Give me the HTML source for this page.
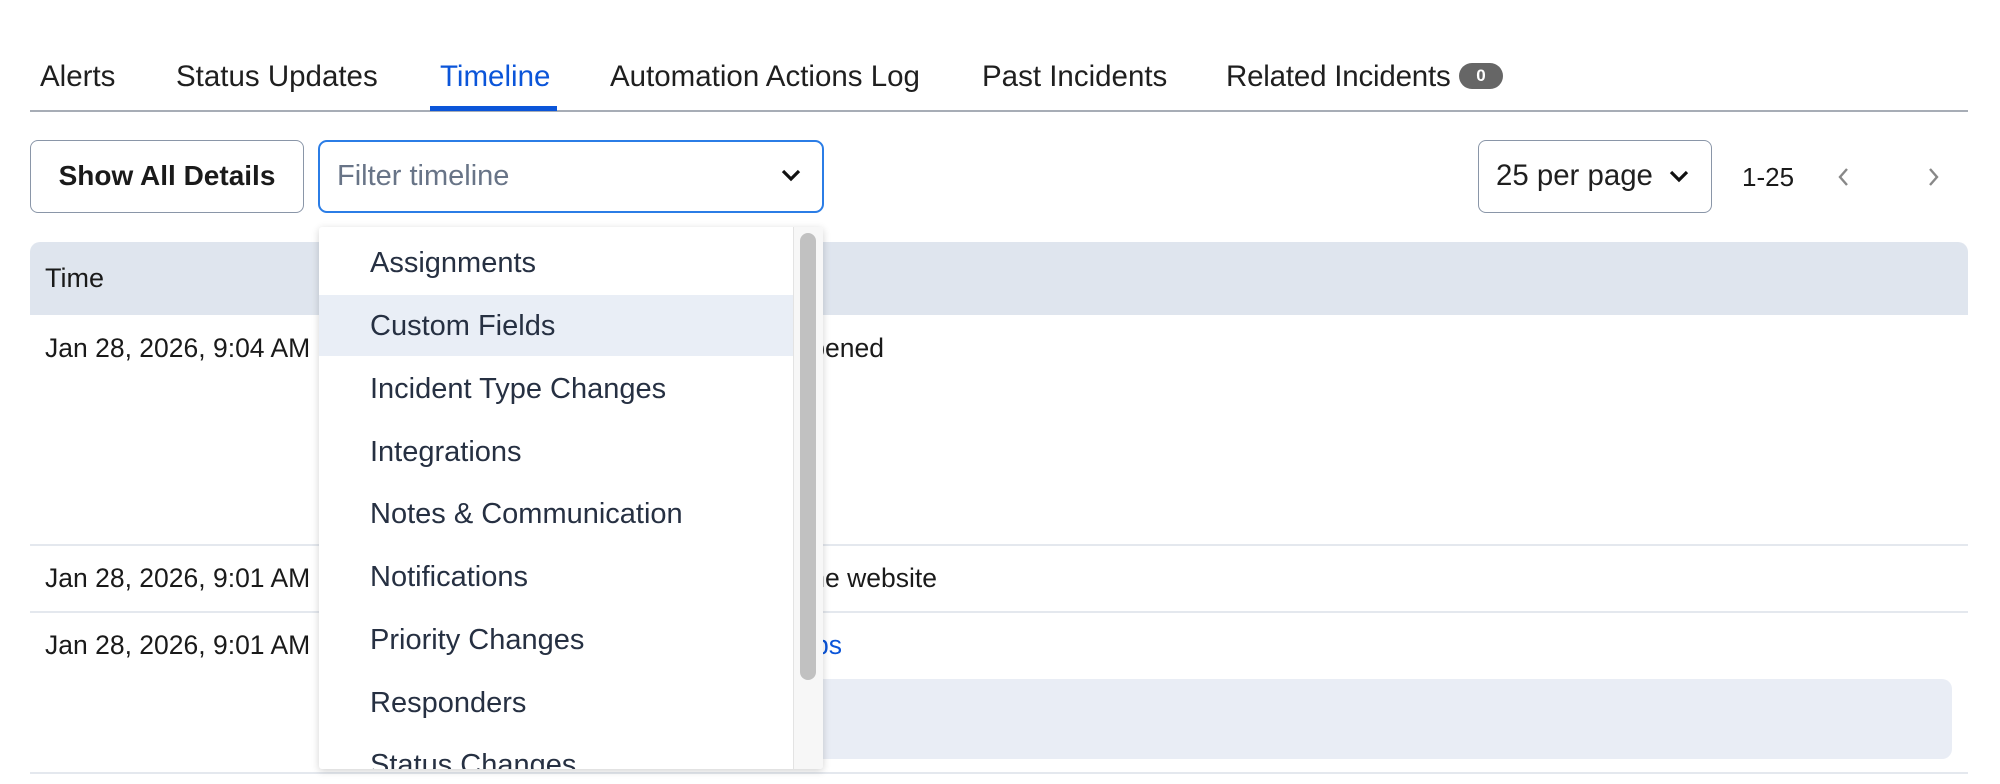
<!DOCTYPE html>
<html><head><meta charset="utf-8"><style>
*{box-sizing:border-box;margin:0;padding:0}
body{width:2000px;height:784px;background:#fff;font-family:"Liberation Sans",sans-serif;color:#1a1a1a;position:relative;overflow:hidden}
.a{position:absolute;white-space:nowrap}
.tab{position:absolute;top:59px;font-size:29.5px;line-height:36px;color:#1f1f1f}
.row{font-size:26.5px;line-height:30px;color:#1a1a1a}
.item{position:absolute;left:370px;font-size:29px;line-height:34px;color:#263042}
</style></head><body>
<div class="tab" style="left:40px">Alerts</div>
<div class="tab" style="left:176px">Status Updates</div>
<div class="tab" style="left:440px;color:#0b55d9">Timeline</div>
<div class="tab" style="left:610px">Automation Actions Log</div>
<div class="tab" style="left:982px">Past Incidents</div>
<div class="tab" style="left:1226px;letter-spacing:-0.2px">Related Incidents</div>
<div class="a" style="left:1459px;top:63px;width:44px;height:26px;border-radius:13px;background:#666;color:#fff;font-size:17px;font-weight:bold;text-align:center;line-height:26px">0</div>
<div class="a" style="left:30px;top:110px;width:1938px;height:2px;background:#a7adb6"></div>
<div class="a" style="left:430px;top:106px;width:127px;height:5px;background:#0b55d9"></div>

<div class="a" style="left:30px;top:140px;width:274px;height:73px;border:1.5px solid #8a96a8;border-radius:8px;font-size:28px;font-weight:bold;line-height:70px;text-align:center">Show All Details</div>
<div class="a" style="left:318px;top:140px;width:506px;height:73px;border:2px solid #2b7de6;border-radius:9px;font-size:29px;line-height:69px;padding-left:17px;color:#687487">Filter timeline
<svg style="position:absolute;left:460px;top:26px" width="22" height="16" viewBox="0 0 22 16"><path d="M3 3 L11 11 L19 3" fill="none" stroke="#111" stroke-width="3.2"/></svg></div>

<div class="a" style="left:1478px;top:140px;width:234px;height:73px;border:1.5px solid #8a96a8;border-radius:8px;font-size:29.4px;line-height:70px;padding-left:17px;color:#1f1f1f">25 per page
<svg style="position:absolute;left:189px;top:28px" width="22" height="16" viewBox="0 0 22 16"><path d="M3 3 L11 11 L19 3" fill="none" stroke="#111" stroke-width="3.2"/></svg></div>
<div class="a" style="left:1742px;top:160px;font-size:26px;line-height:34px">1-25</div>
<svg class="a" style="left:1836px;top:165px" width="16" height="24" viewBox="0 0 16 24"><path d="M11 4 L4 12 L11 20" fill="none" stroke="#888" stroke-width="2.4"/></svg>
<svg class="a" style="left:1925px;top:165px" width="16" height="24" viewBox="0 0 16 24"><path d="M5 4 L12 12 L5 20" fill="none" stroke="#888" stroke-width="2.4"/></svg>

<div class="a" style="left:30px;top:242px;width:1938px;height:73px;background:#dfe5ee;border-radius:10px 10px 0 0"></div>
<div class="a" style="left:45px;top:263px;font-size:27px;line-height:30px">Time</div>
<div class="a row" style="left:45px;top:333px">Jan 28, 2026, 9:04 AM</div>
<div class="a row" style="right:1116px;top:333px">Incident opened</div>
<div class="a" style="left:30px;top:544px;width:1938px;height:2px;background:#e4e8ee"></div>
<div class="a row" style="left:45px;top:563px">Jan 28, 2026, 9:01 AM</div>
<div class="a row" style="right:1063px;top:563px">Incident reported on the website</div>
<div class="a" style="left:30px;top:611px;width:1938px;height:2px;background:#e4e8ee"></div>
<div class="a row" style="left:45px;top:630px">Jan 28, 2026, 9:01 AM</div>
<div class="a row" style="right:1158px;top:630px;color:#0b55d9">Ops</div>
<div class="a" style="left:700px;top:679px;width:1252px;height:80px;background:#e9edf5;border-radius:10px"></div>
<div class="a" style="left:30px;top:772px;width:1938px;height:2px;background:#e4e8ee"></div>

<div class="a" style="left:319px;top:227px;width:504px;height:542px;background:#fff;box-shadow:0 2px 8px rgba(0,0,0,.18);overflow:hidden;border-radius:3px">
<div class="a" style="left:0;top:68px;width:474px;height:61px;background:#e9eef6"></div>
<div class="a" style="left:474px;top:0;width:30px;height:542px;background:#f7f7f7;border-left:1px solid #e3e3e3"></div>
<div class="a" style="left:481px;top:6px;width:16px;height:447px;background:#c1c1c1;border-radius:8px"></div>
</div>
<div class="item" style="top:246px">Assignments</div>
<div class="item" style="top:309px">Custom Fields</div>
<div class="item" style="top:372px">Incident Type Changes</div>
<div class="item" style="top:435px">Integrations</div>
<div class="item" style="top:497px">Notes &amp; Communication</div>
<div class="item" style="top:560px">Notifications</div>
<div class="item" style="top:623px">Priority Changes</div>
<div class="item" style="top:686px">Responders</div>
<div class="a" style="left:319px;top:740px;width:474px;height:29px;overflow:hidden"><div class="item" style="left:51px;top:8px">Status Changes</div></div>
</body></html>
